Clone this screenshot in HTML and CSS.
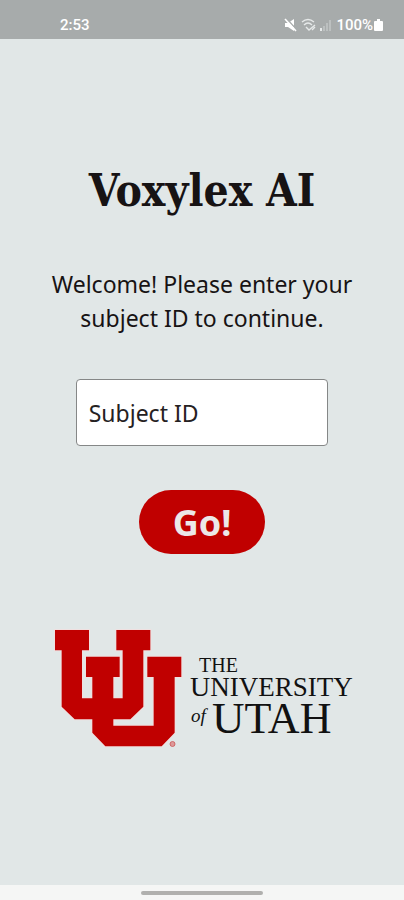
FILE: index.html
```html
<!DOCTYPE html>
<html lang="en">
<head>
<meta charset="utf-8">
<meta name="viewport" content="width=device-width, initial-scale=1">
<title>Voxylex AI</title>
<link rel="stylesheet" href="styles.css">
</head>
<body>
<header class="status">
  <span>2:53</span>
  <div class="status-right">
    <svg class="status-icons" width="50" height="16" viewBox="0 0 50 16" aria-hidden="true">
      <path d="M2 6h3l6-4v12l-6-4H2z" fill="#fff"/>
      <path d="M3 1l10 11" stroke="#a7abab" stroke-width="1.5"/>
      <path d="M2 2l11 12" stroke="#fff" stroke-width="1.6"/>
      <g fill="none" stroke="#e6e9e9" stroke-width="1.4">
        <path d="M19 5q6-5 12 0M21 8q4-4 8 0M23 10l3 3 6-5M29 13l3-3"/>
      </g>
      <path d="M37 11h2v3h-2z" fill="#e6e9e9"/>
      <path d="M40 9h2v5h-2zM43 6h2v8h-2zM46 3h2v11h-2z" fill="#bcc0c0"/>
    </svg>
    <span>100%</span>
    <svg width="9" height="14" viewBox="0 0 9 14" aria-hidden="true"><path d="M3 1h3v2h2q1 0 1 1v8q0 1-1 1H1q-1 0-1-1V4q0-1 1-1h2z" fill="#fff"/></svg>
  </div>
</header>
<main class="content">
  <h1 class="title">Voxylex AI</h1>
  <p class="intro">Welcome! Please enter your subject ID to continue.</p>
  <form class="form">
    <input class="field" type="text" placeholder="Subject ID" aria-label="Subject ID">
    <button class="go" type="button">Go!</button>
  </form>
  <svg class="logo" viewBox="48 625 308 126" role="img" aria-label="The University of Utah">
    <defs>
      <path id="back-u" d="M45 30H147V91H126V235H248V91H229V30H331V91H310V260L271 298H104L65 260V91H45Z"/>
      <path id="front-u" d="M138 110H239V171H220V317H341V171H322V110H424V171H404V338L365 379H196L157 338V171H138Z"/>
    </defs>
    <g transform="translate(40 620) scale(.3333)">
      <g fill="none" stroke="#f0e0e0" stroke-width="6"><use href="#back-u"/><use href="#front-u"/></g>
      <g fill="#c00000"><use href="#back-u"/><use href="#front-u"/></g>
    </g>
    <circle cx="172.500" cy="744" r="2.500" fill="#d99" stroke="#c55" stroke-width=".8"/>
    <g class="logo-text">
      <text x="199" y="672" font-size="20">THE</text>
      <text x="190" y="696" font-size="28">U<tspan font-size="27">NIVERSITY</tspan></text>
      <text x="191" y="722" font-size="19" font-style="italic">of</text>
      <text x="212" y="733" font-size="45">U<tspan font-size="44">TAH</tspan></text>
    </g>
  </svg>
</main>
<footer class="navbar"><span class="handle"></span></footer>
</body>
</html>
```
FILE: styles.css
```css
* { box-sizing: border-box; }
body {
  margin: 0;
  min-height: 100vh;
  display: flex;
  flex-direction: column;
  background: #e1e7e7;
  color: #171314;
  font-family: "Noto Sans", sans-serif;
}
.status {
  height: 39px;
  padding: 10px 21px 0 60px;
  display: flex;
  justify-content: space-between;
  background: #a7abab;
  color: #fff;
  font: 500 15px/30px Roboto, sans-serif;
}
.status-right { display: flex; align-items: center; gap: 1px; }
.status-icons { margin-right: 2px; }
.content {
  flex: 1;
  display: flex;
  flex-direction: column;
  align-items: center;
  padding: 122px 48px 0;
}
.title {
  margin: 0;
  font: bold 44px/60px "DejaVu Serif Condensed", "DejaVu Serif", serif;
  white-space: nowrap;
}
.intro {
  margin: 46px 0 0;
  font-size: 23px;
  line-height: 34px;
  text-align: center;
}
.form {
  width: 100%;
  display: flex;
  flex-direction: column;
  align-items: center;
  gap: 44px;
  margin-top: 44px;
}
.field {
  width: 82%;
  height: 67px;
  padding: 0 12px;
  border: 1px solid #858787;
  border-radius: 4px;
  background: #fff;
  color: inherit;
  font: 23px "Noto Sans", sans-serif;
}
.field::placeholder { color: #252122; opacity: 1; }
.go {
  padding: 0 34px;
  height: 64px;
  border: 0;
  border-radius: 32px;
  background: #c00000;
  color: #ece8e8;
  font: bold 36px "Noto Sans", sans-serif;
}
.logo { width: 100%; margin-top: 71px; overflow: visible; }
.logo-text { fill: #111; font-family: "Liberation Serif", serif; }
.navbar {
  height: 15px;
  display: flex;
  justify-content: center;
  padding-top: 6px;
  background: #f5f6f5;
}
.handle { width: 30%; height: 4px; border-radius: 2px; background: #b0b0ae; }
```
